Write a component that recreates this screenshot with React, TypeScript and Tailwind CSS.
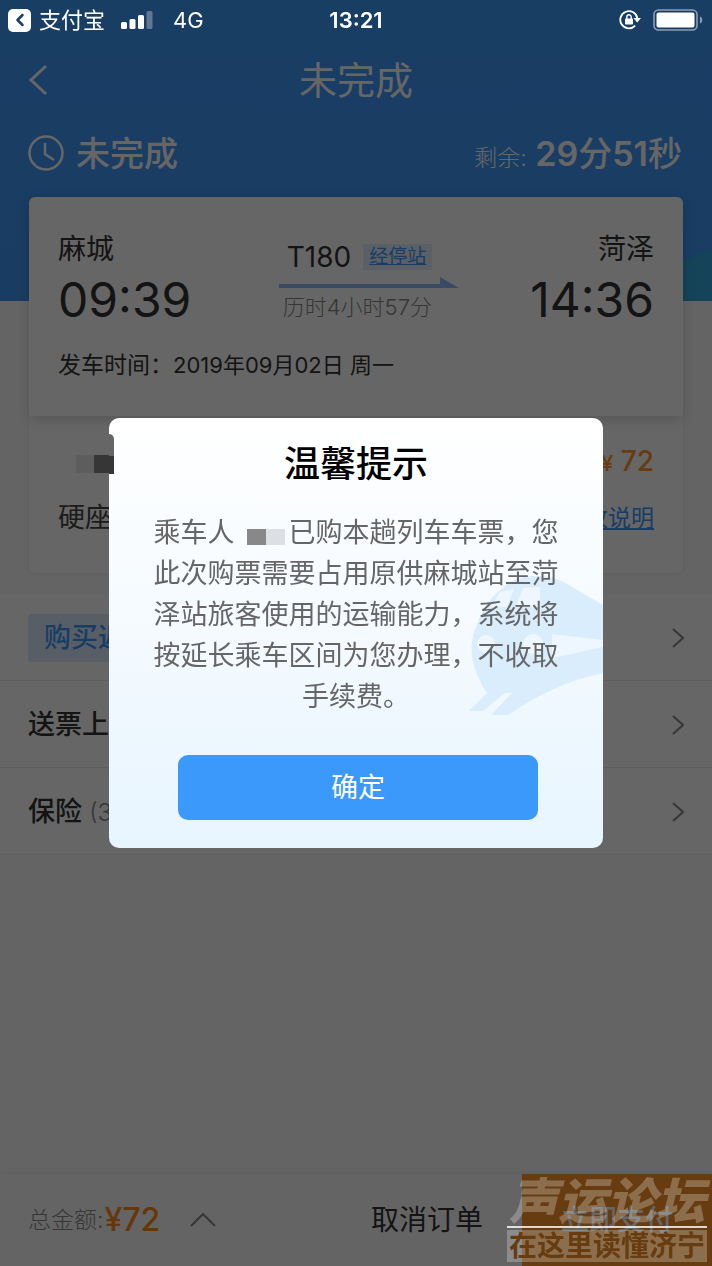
import React from 'react';
import { ChevronLeft } from 'lucide-react';

const Chevron: React.FC<{ className?: string }> = ({ className }) => (
  <svg viewBox="0 0 12 20" className={className} fill="none" stroke="currentColor" strokeWidth="2">
    <path d="M1 1l10 9-10 9" />
  </svg>
);

const StatusBar: React.FC = () => (
  <div className="relative z-20 grid h-10 grid-cols-3 items-center px-2 text-white">
    <div className="flex items-center gap-2 whitespace-nowrap text-[22px]">
      <button aria-label="返回支付宝" className="flex h-[23px] w-[23px] items-center justify-center rounded-[5px] bg-white text-[#1a3e66]">
        <ChevronLeft className="h-5 w-5" strokeWidth={3} />
      </button>
      <span>支付宝</span>
      <svg viewBox="0 0 32 20" className="ml-2 h-5 w-8" fill="currentColor">
        <rect x="0" y="12" width="6" height="7" rx="1.5" />
        <rect x="8.5" y="9" width="6" height="10" rx="1.5" />
        <rect x="17" y="5" width="6" height="14" rx="1.5" />
        <rect x="25.5" y="1" width="6" height="18" rx="1.5" opacity="0.3" />
      </svg>
      <span className="ml-3">4G</span>
    </div>
    <div className="text-center text-[22px] font-semibold">13:21</div>
    <div className="flex items-center justify-end gap-3">
      <svg viewBox="0 0 22 20" className="h-5 w-[22px]" fill="none" stroke="currentColor" strokeWidth="1.8">
        <path d="M16.2 15.6A8.6 8.6 0 1 1 18.4 8.5" />
        <path d="M14.5 8h7.5l-3.8 4.5z" fill="currentColor" stroke="none" />
        <rect x="6" y="8.5" width="8" height="6" rx="0.8" fill="currentColor" stroke="none" />
        <path d="M7.8 9V7a2.2 2.2 0 0 1 4.4 0v2" strokeWidth="1.4" />
      </svg>
      <svg viewBox="0 0 51 22" className="h-[22px] w-[51px]">
        <rect x="1" y="1" width="43" height="20" rx="4.5" fill="none" stroke="#8c9fb4" strokeWidth="1.6" />
        <rect x="3.5" y="3.5" width="38" height="15" rx="2" fill="#fff" />
        <path d="M47 7.5c3 1 3 6 0 7z" fill="#8c9fb4" />
      </svg>
    </div>
  </div>
);

const TrainCard: React.FC = () => (
  <section className="relative h-[219px] rounded-t-md rounded-b-xs bg-white px-[29px] pt-8 text-[#333] shadow-[0_4px_14px_rgba(0,0,0,0.16)]">
    <div className="flex justify-between">
      <div>
        <div className="text-[28px] leading-10">麻城</div>
        <div className="text-[48px] leading-[62px]">09:39</div>
      </div>
      <div className="ml-4 flex flex-col pt-2">
        <div className="flex items-center gap-3 pl-2">
          <span className="text-[28px] leading-10">T180</span>
          <a href="#" className="bg-[#e4f0ff] px-[6px] text-[19px] leading-[26px] text-[#3b99fc] underline">经停站</a>
        </div>
        <svg viewBox="0 0 180 12" className="h-3 w-[180px]" fill="#8fbcf5">
          <path d="M0 7h161V0l19 11H0z" />
        </svg>
        <div className="pl-1 text-[22px] font-light leading-9 text-[#888]">历时4小时57分</div>
      </div>
      <div className="text-right">
        <div className="text-[28px] leading-10">菏泽</div>
        <div className="text-[48px] leading-[62px]">14:36</div>
      </div>
    </div>
    <div className="mt-[18px] text-[22px] leading-8">
      <span className="text-[23px]">发车时间：</span>2019年09月02日 周一
    </div>
  </section>
);

const PassengerCard: React.FC = () => (
  <section className="flex h-[157px] flex-col rounded-b-md bg-white px-[29px] pt-[22px] text-[#444] shadow-[0_1px_4px_rgba(0,0,0,0.08)]">
    <div className="flex h-12 items-center justify-between">
      <div className="ml-[18px] flex pt-1">
        <span className="h-[18px] w-[18px] bg-[#e8e8e8]" />
        <span className="h-[18px] w-5 bg-[#888]" />
      </div>
      <div className="text-[28px] font-medium leading-10 text-[#ff9628]">
        <span className="text-[22px]">¥</span> 72
      </div>
    </div>
    <div className="flex h-16 items-center justify-between">
      <span className="text-[27px]">硬座</span>
      <a href="#" className="text-[23px] text-[#3b99fc] underline">退改说明</a>
    </div>
  </section>
);

const OptionRows: React.FC = () => (
  <ul className="mt-[21px] bg-white text-[27px] font-medium text-[#333]">
    <li className="flex h-[87px] items-center justify-between border-b border-[#ececec] px-7 pt-[2px]">
      <span className="rounded bg-[#dcecff] px-4 leading-[48px] text-[#3b99fc]">购买返程</span>
      <Chevron className="h-5 w-3 text-[#888]" />
    </li>
    <li className="flex h-[87px] items-center justify-between border-b border-[#ececec] px-7 pt-[2px]">
      <span>送票上门</span>
      <Chevron className="h-5 w-3 text-[#888]" />
    </li>
    <li className="flex h-[87px] items-center justify-between border-b border-[#ececec] px-7 pt-[2px]">
      <span>
        保险 <span className="text-[24px] font-light text-[#888]">(30元)</span>
      </span>
      <Chevron className="h-5 w-3 text-[#888]" />
    </li>
  </ul>
);

const FooterBar: React.FC = () => (
  <footer className="mt-auto flex h-[92px] items-stretch bg-[#fafafa] shadow-[0_-2px_6px_rgba(0,0,0,0.06)]">
    <div className="flex flex-1 items-center pl-7">
      <span className="text-[23px] font-light text-[#888]">总金额:</span>
      <span className="ml-px text-[32px] font-medium text-[#ff8a1e]">¥72</span>
      <button aria-label="展开明细" className="ml-[30px] text-[#888]">
        <svg viewBox="0 0 26 14" className="h-[14px] w-[26px]" fill="none" stroke="currentColor" strokeWidth="2">
          <path d="M1 13L13 1l12 12" />
        </svg>
      </button>
    </div>
    <button className="px-[39px] text-[28px] text-[#333]">取消订单</button>
    <button className="w-[190px] bg-[#ff9628] text-[28px] font-medium text-white">立即支付</button>
  </footer>
);

const Train: React.FC = () => (
  <svg viewBox="0 0 134 142" className="absolute right-0 top-[156px] h-[142px] w-[134px]">
    <path
      d="M34 14C46 0 78-2 98 10L134 31V99C100 106 70 120 39 141H22L43 119H36L14 137H0L18 119C2 94-2 74 8 50C14 34 22 22 34 14z"
      fill="#d9edfd"
    />
    <path d="M31 18L45 15L38 33H22zM54 14L71 13V33H47z" fill="#eef7ff" />
    <path d="M83 60L134 66V73L83 84z" fill="#eef7ff" />
    <circle cx="17" cy="70" r="9" fill="#eef7ff" />
    <circle cx="64" cy="70" r="10" fill="#eef7ff" />
  </svg>
);

const NoticeDialog: React.FC = () => (
  <div role="dialog" aria-labelledby="notice-title" className="relative w-[494px] rounded-[10px] bg-linear-to-b from-white via-[#f4faff] to-[#e7f5ff] pb-7 pt-[21px]">
    <Train />
    {/* mosaic over the passenger name */}
    <span className="absolute left-0 top-4 h-[22px] w-[5px] rounded-tr-md bg-[#666]" />
    <span className="absolute left-0 top-[38px] h-[18px] w-[5px] bg-[#363636]" />
    <h2 id="notice-title" className="text-center text-[36px] font-medium leading-[50px] text-black">温馨提示</h2>
    <p className="relative mt-[23px] px-[43px] text-center text-[27px] leading-[41px] text-[#666]">
      <span className="block whitespace-nowrap">
        乘车人
        <span className="ml-3 mr-1 inline-flex h-4 w-[38px] align-[-3px]">
          <span className="flex-1 bg-[#888]" />
          <span className="flex-1 bg-[#dcdfe3]" />
        </span>
        已购本趟列车车票，您
      </span>
      此次购票需要占用原供麻城站至菏泽站旅客使用的运输能力，系统将按延长乘车区间为您办理，不收取手续费。
    </p>
    <button className="relative ml-[69px] mt-[38px] block h-[65px] w-[360px] rounded-[10px] bg-[#3b99fc] pt-[2px] text-[27px] text-white">确定</button>
  </div>
);

const Watermark: React.FC = () => (
  <div className="pointer-events-none fixed bottom-1 right-[5px] z-30 w-[200px] whitespace-nowrap text-center text-white/25">
    <div className="text-[49px] font-black italic leading-[48px]">声运论坛</div>
    <div className="border-t-2 border-white/80" />
    <div className="mt-[2px] bg-white/25 text-[28px] font-bold leading-8 text-[#663c10]">在这里读懂济宁</div>
  </div>
);

const App: React.FC = () => {
  return (
    <div className="flex min-h-screen flex-col bg-[#fbfbfb] font-[Inter,'Noto_Sans_CJK_SC',sans-serif]">
      <header className="relative -mb-[104px] h-[301px] shrink-0 overflow-hidden bg-linear-to-b from-[#409bfb] to-[#3f98f5]">
        <svg viewBox="0 0 40 60" className="absolute bottom-0 right-0 h-[60px] w-10" fill="#35a9e0">
          <path d="M0 25C14 20 26 12 40 9V60H0z" />
        </svg>
        <StatusBar />
        <nav className="flex h-20 items-center justify-between px-7 text-white">
          <button aria-label="返回" className="w-6">
            <svg viewBox="0 0 20 32" className="h-8 w-5" fill="none" stroke="currentColor" strokeWidth="3">
              <path d="M18 2L3 16l15 14" />
            </svg>
          </button>
          <h1 className="text-[38px]">未完成</h1>
          <span className="w-6" />
        </nav>
        <div className="flex h-[66px] items-center justify-between pl-7 pr-[30px] text-white">
          <div className="flex items-center gap-3 text-[34px] font-medium">
            <svg viewBox="0 0 36 36" className="h-9 w-9" fill="none" stroke="currentColor" strokeWidth="2.5">
              <circle cx="18" cy="18" r="16.5" />
              <path d="M17 8v11l9 6" />
            </svg>
            未完成
          </div>
          <div className="text-[34px] font-semibold">
            <span className="text-[23px] font-light">剩余:</span> 29<span className="font-medium">分</span>51<span className="font-medium">秒</span>
          </div>
        </div>
      </header>
      <main className="flex flex-1 flex-col">
        <div className="px-[29px]">
          <TrainCard />
          <PassengerCard />
        </div>
        <OptionRows />
        <FooterBar />
      </main>
      <div className="fixed inset-0 z-10 flex items-center justify-center bg-black/60">
        <NoticeDialog />
      </div>
      <Watermark />
    </div>
  );
};

export default App;
